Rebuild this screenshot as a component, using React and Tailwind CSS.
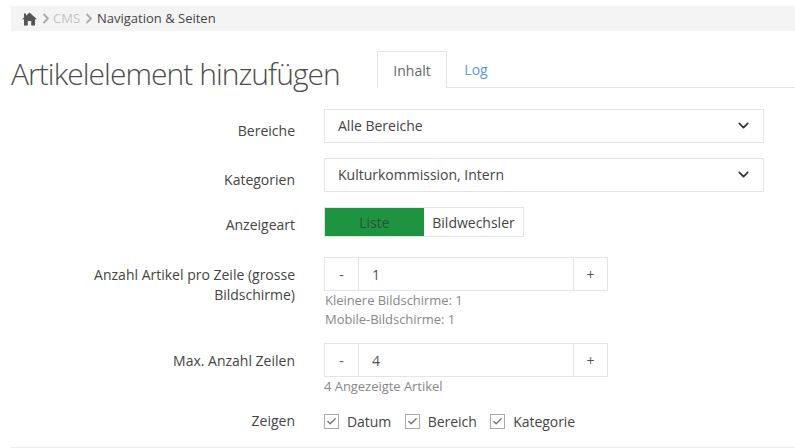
import React from "react";
import { ChevronDown, Check } from "lucide-react";

const Label = ({ children, className = "" }) => (
  <div className={`w-[295px] shrink-0 pl-[90px] text-right text-[14px] leading-[20px] text-[#444444] ${className}`}>{children}</div>
);

const Select = ({ value }) => (
  <div className="ml-[29px] flex h-[34px] w-[440px] items-center justify-between border border-[#e4e4e4] pb-[2px] pl-[13px] pr-[11px] text-[14px] text-[#444444]">
    <span>{value}</span>
    <ChevronDown size={17} strokeWidth={2.4} className="text-[#333333]" />
  </div>
);

const Stepper = ({ value }) => (
  <div className="flex h-[34px] w-[284px] border border-[#e4e4e4] text-[14px] text-[#555555]">
    <div className="flex w-[34px] items-center justify-center border-r border-[#e4e4e4]">-</div>
    <div className="flex flex-1 items-center pl-[13px]">{value}</div>
    <div className="flex w-[34px] items-center justify-center border-l border-[#e4e4e4]">+</div>
  </div>
);

const Checkbox = ({ label }) => (
  <div className="flex items-center">
    <span className="flex h-[15px] w-[15px] items-center justify-center border border-[#aaaaaa]">
      <Check size={11} strokeWidth={3} className="text-[#777777]" />
    </span>
    <span className="ml-[8px] text-[14px] tracking-[-0.05px] text-[#444444]">{label}</span>
  </div>
);

export default function App() {
  return (
    <div className="h-[448px] w-[795px] overflow-hidden bg-white font-['Open_Sans',sans-serif]">
      <div className="pl-[11px] pt-[6px]">
        <div className="flex h-[25px] items-center bg-[#f4f4f4] pl-[11px] text-[13px]">
          <svg width="15" height="14" viewBox="0 0 15 13" className="text-[#555555]" fill="currentColor">
            <path d="M7.5 0 L15 6.8 H13 V13 H9.2 V8.5 H5.8 V13 H2 V6.8 H0 L2 5 V1 H4 V3.2 Z" />
          </svg>
          <svg width="8" height="11" viewBox="0 0 8 11" className="ml-[5px]" fill="none" stroke="#aaaaaa" strokeWidth="1.8">
            <path d="M1.5 1 L6 5.5 L1.5 10" />
          </svg>
          <span className="ml-[3px] text-[#c4c4c4]">CMS</span>
          <svg width="8" height="11" viewBox="0 0 8 11" className="ml-[5px]" fill="none" stroke="#aaaaaa" strokeWidth="1.8">
            <path d="M1.5 1 L6 5.5 L1.5 10" />
          </svg>
          <span className="ml-[4px] text-[#444444]">Navigation &amp; Seiten</span>
        </div>
        <div className="mt-[20px] flex h-[37px] items-end">
          <h1 className="w-[366px] shrink-0 self-start whitespace-nowrap pt-[4px] text-[30px] font-light leading-[37px] tracking-[-0.96px] text-[#4c4c4c]">Artikelelement hinzufügen</h1>
          <div className="flex flex-1 border-b border-[#e4e4e4] text-[14px]">
            <div className="mb-[-1px] flex h-[37px] w-[70px] items-center justify-center border border-b-0 border-[#e4e4e4] bg-white text-[#666666]">Inhalt</div>
            <div className="flex h-[36px] w-[58px] items-center justify-center text-[#5b9bd5]">Log</div>
          </div>
        </div>
      </div>

      <div className="mt-[21px] flex h-[34px] items-center">
        <Label className="pt-[9px]">Bereiche</Label>
        <Select value="Alle Bereiche" />
      </div>
      <div className="mt-[15px] flex h-[34px] items-center">
        <Label className="pt-[9px]">Kategorien</Label>
        <Select value="Kulturkommission, Intern" />
      </div>
      <div className="mt-[15px] flex h-[30px] items-center">
        <Label className="pt-[5px]">Anzeigeart</Label>
        <div className="ml-[29px] flex h-[30px] w-[200px] border border-[#e4e4e4] text-[14px] text-[#444444]">
          <div className="flex w-[99px] items-center justify-center bg-[#1e9440] text-[#2f4f3a]">Liste</div>
          <div className="flex flex-1 items-center justify-center">Bildwechsler</div>
        </div>
      </div>

      <div className="mt-[20px] flex">
        <Label className="pt-[8px]">Anzahl Artikel pro Zeile (grosse Bildschirme)</Label>
        <div className="ml-[29px]">
          <Stepper value="1" />
          <div className="pl-[1px] text-[13px] leading-[19px] tracking-[-0.04px] text-[#888888]">
            <div>Kleinere Bildschirme: 1</div>
            <div>Mobile-Bildschirme: 1</div>
          </div>
        </div>
      </div>

      <div className="mt-[14px] flex">
        <Label className="pt-[8px]">Max. Anzahl Zeilen</Label>
        <div className="ml-[29px]">
          <Stepper value="4" />
          <div className="text-[13px] leading-[19px] tracking-[-0.04px] text-[#888888]">4 Angezeigte Artikel</div>
        </div>
      </div>

      <div className="mt-[15px] flex h-[20px] items-center">
        <Label>Zeigen</Label>
        <div className="ml-[29px] flex gap-[13.5px]">
          <Checkbox label="Datum" />
          <Checkbox label="Bereich" />
          <Checkbox label="Kategorie" />
        </div>
      </div>
      <div className="ml-[11px] mt-[16px] border-t border-[#eeeeee]" />
    </div>
  );
}
